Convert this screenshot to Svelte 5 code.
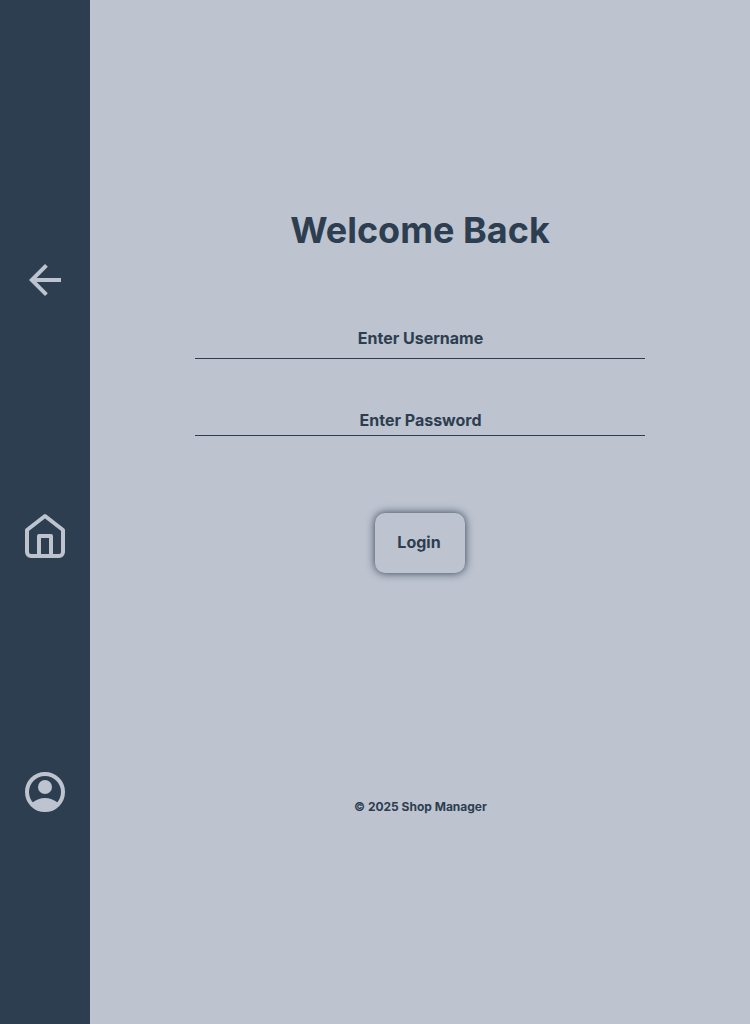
<script>
  let username = $state('');
  let password = $state('');
</script>

<div class="page">
  <nav class="sidebar">
    <a href="#back" aria-label="Back">
      <svg viewBox="0 0 24 24" fill="currentColor">
        <path d="M20 11H7.83l5.59-5.59L12 4l-8 8 8 8 1.41-1.41L7.83 13H20v-2z" />
      </svg>
    </a>
    <a href="#home" aria-label="Home">
      <svg viewBox="0 0 24 24" fill="none" stroke="currentColor" stroke-width="2" stroke-linecap="round" stroke-linejoin="round">
        <path d="M3 9l9-7 9 7v11a2 2 0 0 1-2 2H5a2 2 0 0 1-2-2z" />
        <path d="M9 22V12h6v10" />
      </svg>
    </a>
    <a href="#account" aria-label="Account">
      <svg viewBox="0 0 24 24" fill="currentColor">
        <circle cx="12" cy="12" r="9" fill="none" stroke="currentColor" stroke-width="2" />
        <circle cx="12" cy="9.5" r="3.5" />
        <path d="M5.4 17.45Q7.125 16.125 8.7 15.563T12 15t3.3.563 3.3 1.887A9 9 0 0 1 5.4 17.45z" />
      </svg>
    </a>
  </nav>

  <main>
    <h1>Welcome Back</h1>
    <form onsubmit={(e) => e.preventDefault()}>
      <input class="username" type="text" placeholder="Enter Username" bind:value={username} />
      <input class="password" type="password" placeholder="Enter Password" bind:value={password} />
      <button type="submit">Login</button>
    </form>
    <footer>© 2025 Shop Manager</footer>
  </main>
</div>

<style>
  .page {
    display: flex;
    height: 100vh;
    min-height: 1024px;
    background: #bdc3cf;
    color: #2c3e50;
    font-family: Inter, sans-serif;
    font-weight: 700;
  }
  .sidebar {
    width: 90px;
    flex: none;
    box-sizing: border-box;
    padding-top: 152px;
    display: grid;
    grid-template-rows: repeat(3, 256px);
    place-items: center;
    background: #2c3e50;
  }
  .sidebar a {
    display: flex;
    color: #bdc3cf;
  }
  svg {
    width: 48px;
    height: 48px;
  }
  main {
    flex: 1;
    display: flex;
    flex-direction: column;
    align-items: center;
    padding-top: 208px;
  }
  h1 {
    margin: 0;
    font-size: 36px;
    line-height: 44px;
  }
  form {
    display: flex;
    flex-direction: column;
    align-items: center;
    padding-top: 67px;
  }
  input {
    width: 450px;
    box-sizing: border-box;
    border: 0;
    border-bottom: 1px solid #2c3e50;
    border-radius: 0;
    background: transparent;
    padding: 0 0 2px 1px;
    color: inherit;
    font: inherit;
    font-size: 16px;
    text-align: center;
    outline: none;
  }
  input::placeholder {
    color: #2c3e50;
    opacity: 1;
  }
  .username {
    height: 40px;
  }
  .password {
    height: 30px;
    margin-top: 47px;
  }
  button {
    width: 90px;
    height: 60px;
    margin-top: 77px;
    padding: 0 2px 2px 0;
    border: 0;
    border-radius: 10px;
    background: #bdc3cf;
    box-shadow: 0 0 8px #2c3e50;
    color: inherit;
    font: inherit;
    font-size: 16px;
  }
  footer {
    margin-top: 226px;
    padding-left: 1px;
    font-size: 12px;
    line-height: 16px;
  }
</style>
